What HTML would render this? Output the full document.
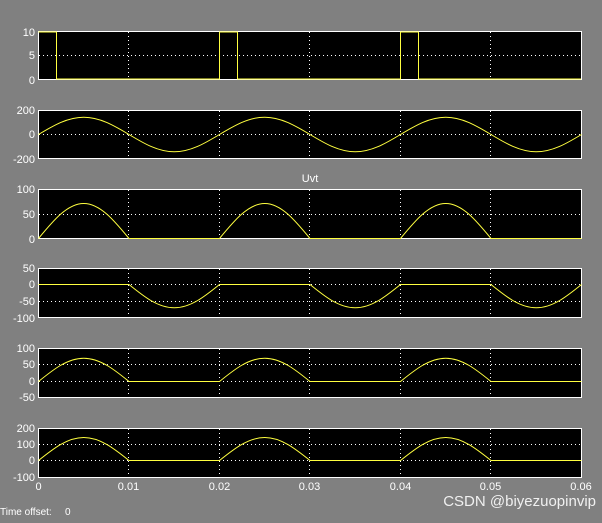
<!DOCTYPE html>
<html><head><style>
html,body{margin:0;padding:0;background:#808080;}
svg{display:block}
text{font-family:"Liberation Sans",sans-serif;font-size:11px;fill:#fff}
</style></head><body>
<svg width="602" height="523" xmlns="http://www.w3.org/2000/svg">
<rect width="602" height="523" fill="#808080"/>
<defs>
<g id="vg" stroke="#fff" stroke-dasharray="1 3" stroke-width="1">
</g>
</defs>
<!-- plot rects -->
<g fill="#000" stroke="#fff" stroke-width="1">
<rect x="38.5" y="31.5" width="543" height="48"/>
<rect x="38.5" y="110.5" width="543" height="48"/>
<rect x="38.5" y="189.5" width="543" height="49"/>
<rect x="38.5" y="268.5" width="543" height="49"/>
<rect x="38.5" y="348.5" width="543" height="49"/>
<rect x="38.5" y="428.5" width="543" height="49"/>
</g>
<!-- grid -->
<g stroke="#fff" stroke-dasharray="1 3" stroke-width="1">
<path d="M128.5 32V79M219.5 32V79M309.5 32V79M400.5 32V79M490.5 32V79 M39 55.5H581"/>
<path d="M128.5 111V158M219.5 111V158M309.5 111V158M400.5 111V158M490.5 111V158 M39 134.5H581"/>
<path d="M128.5 190V238M219.5 190V238M309.5 190V238M400.5 190V238M490.5 190V238 M39 214.5H581"/>
<path d="M128.5 269V317M219.5 269V317M309.5 269V317M400.5 269V317M490.5 269V317 M39 284.5H581M39 301.5H581"/>
<path d="M128.5 349V397M219.5 349V397M309.5 349V397M400.5 349V397M490.5 349V397 M39 364.5H581M39 381.5H581"/>
<path d="M128.5 429V477M219.5 429V477M309.5 429V477M400.5 429V477M490.5 429V477 M39 444.5H581M39 460.5H581"/>
</g>
<!-- signals -->
<g fill="none" stroke="#ffff40" stroke-width="1">
<path d="M38.5 32H56.5V79H219.5V32H237.5V79H400.5V32H418.5V79H581"/>
<path d="M38.5 134.5 c14.76,-8.86 28.87,-17.3 45.25,-17.3 c16.38,0 30.49,8.44 45.25,17.3 c14.76,8.86 28.87,17.3 45.25,17.3 c16.38,0 30.49,-8.44 45.25,-17.3
 c14.76,-8.86 28.87,-17.3 45.25,-17.3 c16.38,0 30.49,8.44 45.25,17.3 c14.76,8.86 28.87,17.3 45.25,17.3 c16.38,0 30.49,-8.44 45.25,-17.3
 c14.76,-8.86 28.87,-17.3 45.25,-17.3 c16.38,0 30.49,8.44 45.25,17.3 c14.76,8.86 28.87,17.3 45.25,17.3 c16.38,0 30.49,-8.44 45.25,-17.3"/>
<path d="M38.5 238.5 c14.76,-17.93 28.87,-35 45.25,-35 c16.38,0 30.49,17.07 45.25,35 h90.5
 c14.76,-17.93 28.87,-35 45.25,-35 c16.38,0 30.49,17.07 45.25,35 h90.5
 c14.76,-17.93 28.87,-35 45.25,-35 c16.38,0 30.49,17.07 45.25,35 h90.5"/>
<path d="M38.5 284.5 h90.5 c14.76,11.94 28.87,23.3 45.25,23.3 c16.38,0 30.49,-11.36 45.25,-23.3
 h90.5 c14.76,11.94 28.87,23.3 45.25,23.3 c16.38,0 30.49,-11.36 45.25,-23.3
 h90.5 c14.76,11.94 28.87,23.3 45.25,23.3 c16.38,0 30.49,-11.36 45.25,-23.3"/>
<path d="M38.5 381.5 c14.76,-11.94 28.87,-23.3 45.25,-23.3 c16.38,0 30.49,11.36 45.25,23.3 h90.5
 c14.76,-11.94 28.87,-23.3 45.25,-23.3 c16.38,0 30.49,11.36 45.25,23.3 h90.5
 c14.76,-11.94 28.87,-23.3 45.25,-23.3 c16.38,0 30.49,11.36 45.25,23.3 h90.5"/>
<path d="M38.5 460.5 c14.76,-11.78 28.87,-23 45.25,-23 c16.38,0 30.49,11.22 45.25,23 h90.5
 c14.76,-11.78 28.87,-23 45.25,-23 c16.38,0 30.49,11.22 45.25,23 h90.5
 c14.76,-11.78 28.87,-23 45.25,-23 c16.38,0 30.49,11.22 45.25,23 h90.5"/>
</g>
<!-- y labels -->
<g text-anchor="end" font-family="Liberation Sans" font-size="11">
<text x="35" y="36">10</text><text x="35" y="59">5</text><text x="35" y="84">0</text>
<text x="35" y="114">200</text><text x="35" y="138">0</text><text x="35" y="163">-200</text>
<text x="35" y="193">100</text><text x="35" y="218">50</text><text x="35" y="243">0</text>
<text x="35" y="272">50</text><text x="35" y="288">0</text><text x="35" y="305">-50</text><text x="35" y="322">-100</text>
<text x="35" y="352">100</text><text x="35" y="368">50</text><text x="35" y="385">0</text><text x="35" y="401">-50</text>
<text x="35" y="432">200</text><text x="35" y="448">100</text><text x="35" y="464">0</text><text x="35" y="481">-100</text>
</g>
<text x="310" y="182" text-anchor="middle">Uvt</text>
<g text-anchor="middle">
<text x="38.5" y="490">0</text><text x="128.5" y="490">0.01</text><text x="219.5" y="490">0.02</text>
<text x="309.5" y="490">0.03</text><text x="400.5" y="490">0.04</text><text x="490.5" y="490">0.05</text><text x="581" y="490">0.06</text>
</g>
<text x="0" y="515" style="font-size:10px">Time offset:</text>
<text x="65" y="515" style="font-size:10px">0</text>
<text x="596" y="506" text-anchor="end" style="font-size:15px;fill:#f0f0f0">CSDN @biyezuopinvip</text>
</svg>
</body></html>
